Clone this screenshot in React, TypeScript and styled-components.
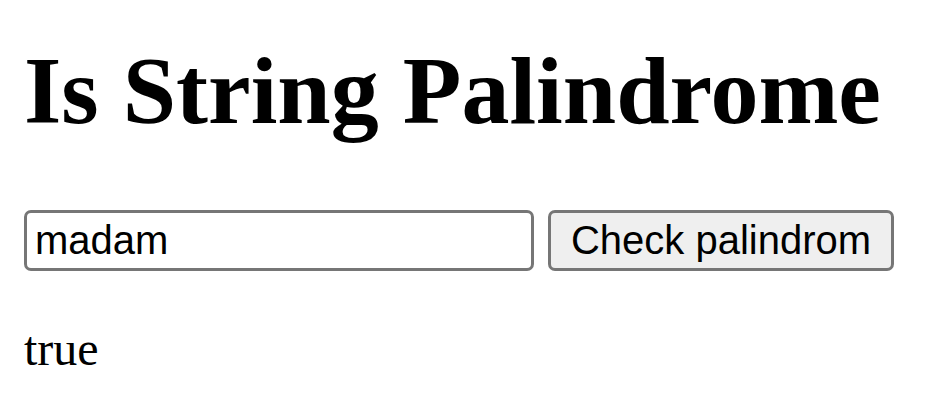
import React, { useState } from "react";
import styled, { createGlobalStyle } from "styled-components";

const Global = createGlobalStyle`
  html, body { margin: 0; padding: 0; background: #fff; }
  body { font-family: "Liberation Serif", "Times New Roman", serif; color: #000; }
`;

const Page = styled.div`
  padding: 0 24px;
`;

const Title = styled.h1`
  margin: 35px 0 0;
  font-family: "Liberation Serif", "Times New Roman", serif;
  font-size: 96px;
  font-weight: bold;
  line-height: normal;
  white-space: nowrap;
`;

const Row = styled.div`
  display: flex;
  align-items: center;
  gap: 14px;
  margin-top: 64px;
`;

const TextInput = styled.input`
  box-sizing: border-box;
  width: 510px;
  height: 61px;
  border: 3px solid #767676;
  border-radius: 7px;
  padding: 0 8px;
  font-family: "Liberation Sans", Arial, sans-serif;
  font-size: 40px;
  color: #000;
  background: #fff;
  outline: none;
`;

const Button = styled.button`
  box-sizing: border-box;
  width: 346px;
  height: 61px;
  border: 3px solid #767676;
  border-radius: 7px;
  background: #efefef;
  padding: 0 18px;
  font-family: "Liberation Sans", Arial, sans-serif;
  font-size: 40px;
  color: #000;
  cursor: pointer;
`;

const Result = styled.p`
  margin: 50px 0 0;
  font-family: "Liberation Serif", "Times New Roman", serif;
  font-size: 48px;
  line-height: normal;
`;

export default function App() {
  const [value, setValue] = useState("madam");
  const [result, setResult] = useState<boolean>(true);
  const check = () => {
    const s = value.toLowerCase();
    setResult(s === s.split("").reverse().join(""));
  };
  return (
    <Page>
      <Global />
      <Title>Is String Palindrome</Title>
      <Row>
        <TextInput value={value} onChange={(e) => setValue(e.target.value)} />
        <Button onClick={check}>Check palindrom</Button>
      </Row>
      <Result>{String(result)}</Result>
    </Page>
  );
}
